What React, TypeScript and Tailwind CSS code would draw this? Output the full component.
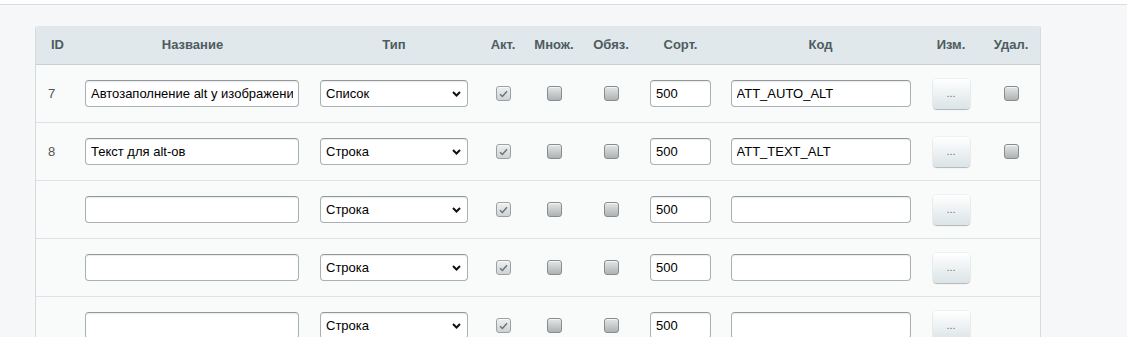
const COLS = "grid grid-cols-[40px_233px_170px_48px_54px_60px_79px_201px_60px_60px]";

type Row = { id: string; name: string; type: string; code: string; canDelete: boolean };

const ROWS: Row[] = [
  { id: "7", name: "Автозаполнение alt у изображений", type: "Список", code: "ATT_AUTO_ALT", canDelete: true },
  { id: "8", name: "Текст для alt-ов", type: "Строка", code: "ATT_TEXT_ALT", canDelete: true },
  { id: "", name: "", type: "Строка", code: "", canDelete: false },
  { id: "", name: "", type: "Строка", code: "", canDelete: false },
  { id: "", name: "", type: "Строка", code: "", canDelete: false },
];

const inputCls =
  "h-[27px] rounded-[4px] border border-[#a9b1b4] border-t-[#8f999d] bg-white px-[5px] text-[13px] text-black outline-none shadow-[inset_0_1px_1px_rgba(0,0,0,0.08)]";

function Check({ checked }: { checked?: boolean }) {
  return (
    <span
      className={`flex h-[15px] w-[15px] items-center justify-center rounded-[3px] border ${
        checked
          ? "border-[#9aa0a3] bg-gradient-to-b from-[#eef0f0] to-[#cfd3d4]"
          : "border-[#868c8f] bg-gradient-to-b from-[#e4e6e6] to-[#aeb2b4]"
      } shadow-[inset_0_1px_0_rgba(255,255,255,0.6)]`}
    >
      {checked && (
        <svg width={9} height={8} viewBox="0 0 9 8">
          <path d="M1 4.2 L3.4 6.5 L8 1.2" fill="none" stroke="#6b7275" strokeWidth={1.4} />
        </svg>
      )}
    </span>
  );
}

export default function App() {
  return (
    <div
      className="h-[337px] w-[1127px] overflow-hidden bg-[#f5f7f8]"
      style={{ fontFamily: '"Liberation Sans", Arial, sans-serif' }}
    >
      <div className="h-[4px] bg-white" />
      <div className="h-px bg-[#d9dcdd]" />
      <div className="pl-[35px] pt-[21px]">
        <div className="w-[1006px] rounded-t-[3px] border-x border-[#d5dcdf] bg-[#f9fafa]">
          {/* header */}
          <div className={`${COLS} h-[39px] items-center rounded-t-[3px] border-b border-[#c6cfd2] bg-[#e0e8eb] text-[13px] font-bold text-[#4e5b61]`}>
            <div className="pl-[15px]">ID</div>
            <div className="text-center">Название</div>
            <div className="text-center">Тип</div>
            <div className="text-center">Акт.</div>
            <div className="text-center">Множ.</div>
            <div className="text-center">Обяз.</div>
            <div className="text-center">Сорт.</div>
            <div className="text-center">Код</div>
            <div className="text-center">Изм.</div>
            <div className="text-center">Удал.</div>
          </div>

          {ROWS.map((r, i) => (
            <div key={i} className={`${COLS} h-[58px] items-center border-b border-[#dde3e5]`}>
              <div className="pl-[12px] text-[13px] text-[#555]">{r.id}</div>
              <div className="flex justify-center pr-px">
                <input readOnly value={r.name} className={`${inputCls} w-[214px]`} />
              </div>
              <div className="flex justify-center">
                <div className={`${inputCls} relative flex w-[148px] items-center`}>
                  <span>{r.type}</span>
                  <svg className="absolute right-[6px] top-[10px]" width={9} height={6} viewBox="0 0 9 6">
                    <path d="M1 1 L4.5 4.5 L8 1" fill="none" stroke="#111" strokeWidth={2} />
                  </svg>
                </div>
              </div>
              <div className="flex justify-center">
                <Check checked />
              </div>
              <div className="flex justify-center">
                <Check />
              </div>
              <div className="flex justify-center">
                <Check />
              </div>
              <div className="flex justify-center">
                <input readOnly value="500" className={`${inputCls} w-[61px]`} />
              </div>
              <div className="flex justify-center">
                <input readOnly value={r.code} className={`${inputCls} w-[180px]`} />
              </div>
              <div className="flex justify-center">
                <button className="flex h-[30px] w-[37px] items-center justify-center rounded-[4px] bg-gradient-to-b from-[#ffffff] to-[#dbe4e7] text-[11px] leading-none text-[#6a7478] shadow-[0_1px_1px_rgba(0,0,0,0.25),0_0_0_1px_rgba(0,0,0,0.04)]">
                  ...
                </button>
              </div>
              <div className="flex justify-center">{r.canDelete && <Check />}</div>
            </div>
          ))}
        </div>
      </div>
    </div>
  );
}
